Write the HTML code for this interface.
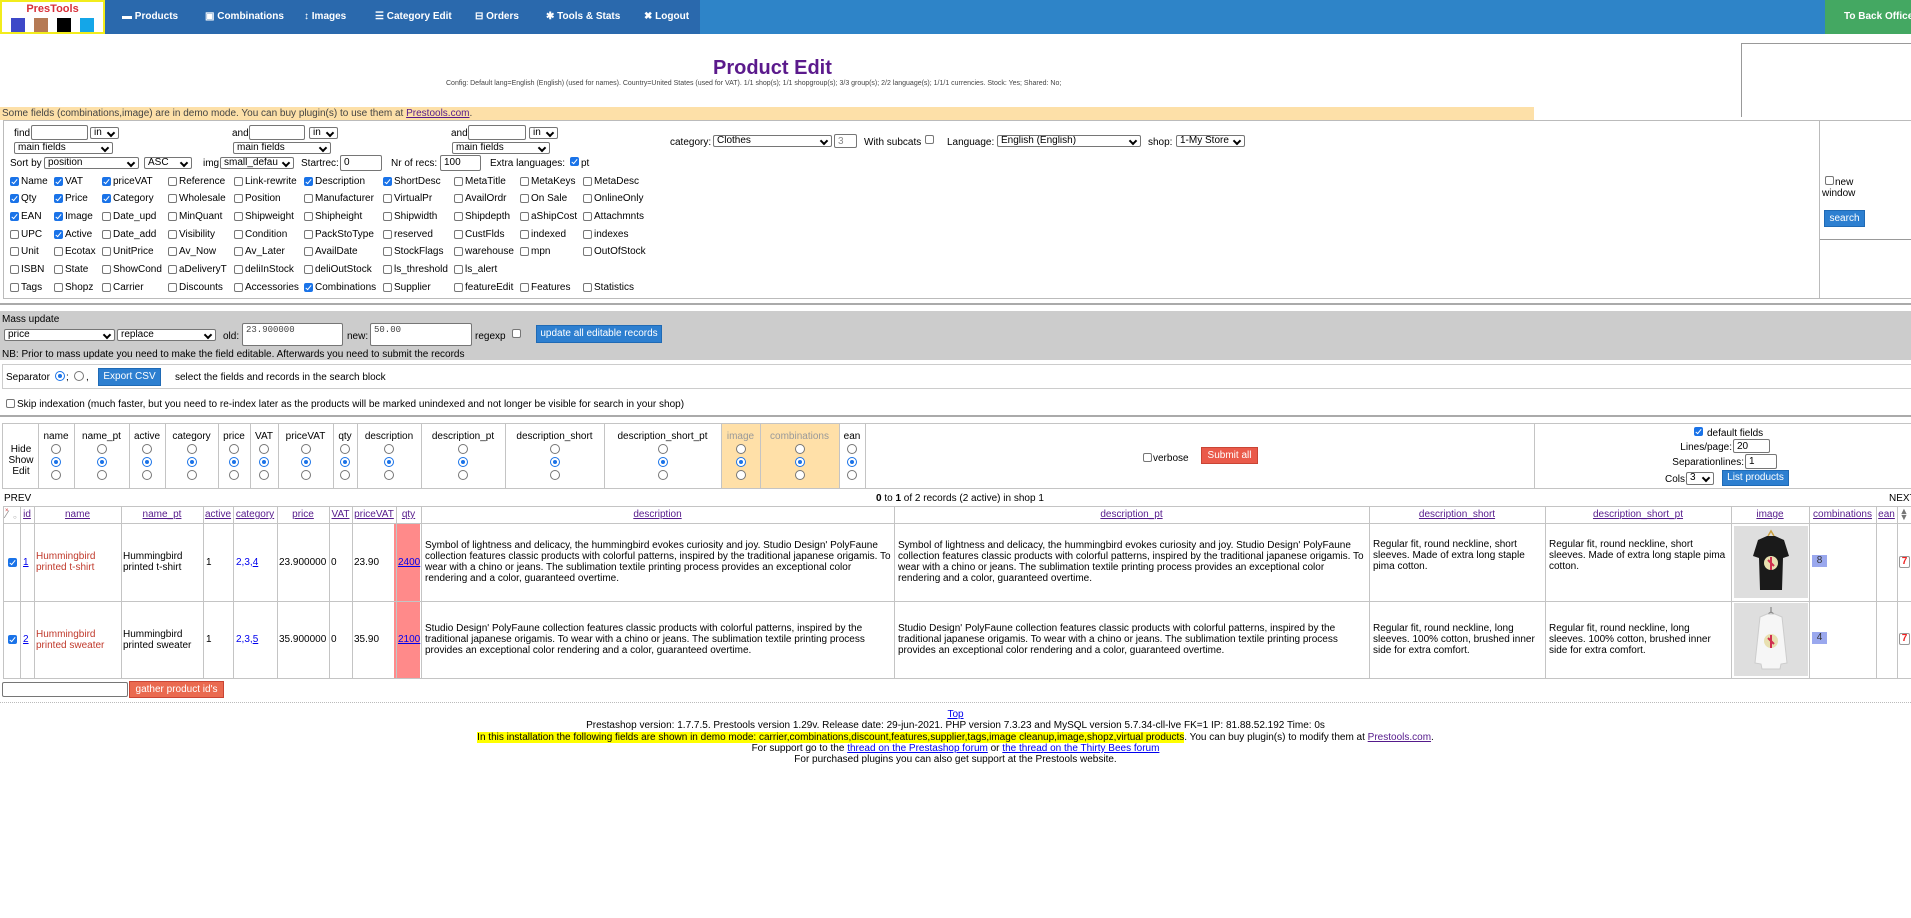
<!DOCTYPE html>
<html><head><meta charset="utf-8"><style>
*{box-sizing:border-box;margin:0;padding:0}
body{width:1911px;height:918px;position:relative;overflow:hidden;background:#fff;font-family:"Liberation Sans",Arial,sans-serif;font-size:10px;color:#000}
.a{position:absolute;white-space:nowrap}
.in{position:absolute;border:1px solid #767676;border-radius:2px;background:#fff;font-size:10px;padding:1px 3px;line-height:11px;overflow:hidden}
.sel{position:absolute;border:1px solid #767676;border-radius:2px;background:#fff;font-size:10px;padding:0 3px;line-height:10px;overflow:hidden;white-space:nowrap}
.sel:after{content:"";position:absolute;right:4px;top:2px;width:4px;height:4px;border-right:2px solid #000;border-bottom:2px solid #000;transform:rotate(45deg)}
.cb{position:absolute;width:9px;height:9px;border:1px solid #767676;border-radius:2px;background:#fff}
.cb.on{background:#1a73e8;border-color:#1a73e8}
.cb.on:after{content:"";position:absolute;left:2px;top:0px;width:2px;height:5px;border-right:1.5px solid #fff;border-bottom:1.5px solid #fff;transform:rotate(40deg)}
.rd{position:absolute;width:10px;height:10px;border:1px solid #767676;border-radius:50%;background:#fff}
.rd.on{border:1px solid #1a73e8}
.rd.on:after{content:"";position:absolute;left:2px;top:2px;width:4px;height:4px;border-radius:50%;background:#1a73e8}
.btn{position:absolute;background:#2d7fd0;color:#fff;border:1px solid #1f6ab5;text-align:center;white-space:nowrap}
.nav{position:absolute;top:11px;color:#fff;font-weight:bold;font-size:10px;white-space:nowrap}
.hd{position:absolute;top:507px;height:16px;line-height:16px;text-align:center;color:#551a8b;text-decoration:underline}
.tx{position:absolute;white-space:normal;line-height:11px}
a{color:#0000ee}
</style></head><body>

<div class="a" style="left:0;top:0;width:1911px;height:34px;background:#2e84c8"></div>
<div class="a" style="left:104px;top:0;width:596px;height:34px;background:#2a69ad"></div>
<div class="a" style="left:1825px;top:0;width:86px;height:34px;background:#44a862"></div>
<div class="a" style="left:0;top:0;width:105px;height:34px;background:#fff;border:2px solid #f2ec1c"></div>
<div class="a" style="left:0;top:3px;width:105px;text-align:center;color:#d8303a;font-weight:bold;font-size:11px">PresTools</div>
<div class="a" style="left:11px;top:18px;width:14px;height:14px;background:#3d48c8"></div>
<div class="a" style="left:34px;top:18px;width:14px;height:14px;background:#b57a55"></div>
<div class="a" style="left:57px;top:18px;width:14px;height:14px;background:#000"></div>
<div class="a" style="left:80px;top:18px;width:14px;height:14px;background:#14a6e8"></div>
<div class="nav" style="left:122px">▬ Products</div>
<div class="nav" style="left:205px">▣ Combinations</div>
<div class="nav" style="left:304px">↕ Images</div>
<div class="nav" style="left:375px">☰ Category Edit</div>
<div class="nav" style="left:475px">⊟ Orders</div>
<div class="nav" style="left:546px">✱ Tools &amp; Stats</div>
<div class="nav" style="left:644px">✖ Logout</div>
<div class="nav" style="left:1844px">To Back Office</div>

<div class="a" style="left:713px;top:57px;font-size:20px;font-weight:bold;color:#5b1a8c">Product Edit</div>
<div class="a" style="left:446px;top:80px;font-size:7px;color:#444">Config: Default lang=English (English) (used for names). Country=United States (used for VAT). 1/1 shop(s); 1/1 shopgroup(s); 3/3 group(s); 2/2 language(s); 1/1/1 currencies. Stock: Yes; Shared: No;</div>
<div class="a" style="left:1741px;top:43px;width:170px;height:74px;border-top:1px solid #999;border-left:1px solid #999"></div>
<div class="a" style="left:0;top:107px;width:1534px;height:13px;background:#fde0a8;color:#444;line-height:13px;padding-left:2px">Some fields (combinations,image) are in demo mode. You can buy plugin(s) to use them at <a href="#" style="color:#551a8b">Prestools.com</a>.</div>

<div class="a" style="left:3px;top:120px;width:1908px;height:179px;border:1px solid #bbb;border-right:none"></div>
<div class="a" style="left:1819px;top:121px;width:1px;height:177px;background:#bbb"></div>
<div class="a" style="left:1820px;top:239px;width:91px;height:1px;background:#999"></div>
<div class="a" style="left:0;top:303px;width:1911px;height:2px;background:#aaa"></div>

<div class="a" style="left:14px;top:128px">find</div><div class="in" style="left:31px;top:125px;width:57px;height:15px"></div><div class="sel" style="left:90px;top:127px;width:29px;height:12px">in</div>
<div class="sel" style="left:14px;top:142px;width:99px;height:12px">main fields</div>
<div class="a" style="left:232px;top:128px">and</div><div class="in" style="left:249px;top:125px;width:56px;height:15px"></div><div class="sel" style="left:309px;top:127px;width:29px;height:12px">in</div>
<div class="sel" style="left:233px;top:142px;width:98px;height:12px">main fields</div>
<div class="a" style="left:451px;top:128px">and</div><div class="in" style="left:468px;top:125px;width:58px;height:15px"></div><div class="sel" style="left:529px;top:127px;width:29px;height:12px">in</div>
<div class="sel" style="left:452px;top:142px;width:98px;height:12px">main fields</div>

<div class="a" style="left:670px;top:137px">category:</div><div class="sel" style="left:713px;top:135px;width:119px;height:12px">Clothes</div><div class="in" style="left:834px;top:134px;width:23px;height:14px;color:#888">3</div>
<div class="a" style="left:864px;top:137px">With subcats</div><div class="cb" style="left:925px;top:135px"></div>
<div class="a" style="left:947px;top:137px">Language:</div><div class="sel" style="left:997px;top:135px;width:144px;height:12px">English (English)</div>
<div class="a" style="left:1148px;top:137px">shop:</div><div class="sel" style="left:1176px;top:135px;width:69px;height:12px">1-My Store</div>

<div class="a" style="left:10px;top:158px">Sort by</div><div class="sel" style="left:44px;top:157px;width:95px;height:12px">position</div><div class="sel" style="left:144px;top:157px;width:48px;height:12px">ASC</div>
<div class="a" style="left:203px;top:158px">img</div><div class="sel" style="left:220px;top:157px;width:74px;height:12px">small_defau</div>
<div class="a" style="left:301px;top:158px">Startrec:</div><div class="in" style="left:340px;top:155px;width:42px;height:16px">0</div>
<div class="a" style="left:391px;top:158px">Nr of recs:</div><div class="in" style="left:440px;top:155px;width:41px;height:16px">100</div>
<div class="a" style="left:490px;top:158px">Extra languages:</div><div class="cb on" style="left:570px;top:157px"></div><div class="a" style="left:581px;top:158px">pt</div>

<div id="grid"></div>

<div class="cb" style="left:1825px;top:176px"></div><div class="a" style="left:1835px;top:177px">new</div><div class="a" style="left:1822px;top:188px">window</div>
<div class="btn" style="left:1824px;top:210px;width:41px;height:17px;line-height:15px">search</div>

<div class="a" style="left:0;top:311px;width:1911px;height:49px;background:#cccccc"></div>
<div class="a" style="left:2px;top:314px">Mass update</div>
<div class="sel" style="left:4px;top:329px;width:111px;height:12px">price</div>
<div class="sel" style="left:117px;top:329px;width:99px;height:12px">replace</div>
<div class="a" style="left:223px;top:331px">old:</div><div class="in" style="left:242px;top:323px;width:101px;height:23px;font-family:'Liberation Mono',monospace;font-size:9px;color:#444">23.900000</div>
<div class="a" style="left:347px;top:331px">new:</div><div class="in" style="left:370px;top:323px;width:102px;height:23px;font-family:'Liberation Mono',monospace;font-size:9px;color:#444">50.00</div>
<div class="a" style="left:475px;top:331px">regexp</div><div class="cb" style="left:512px;top:329px"></div>
<div class="btn" style="left:536px;top:325px;width:126px;height:18px;line-height:16px">update all editable records</div>
<div class="a" style="left:2px;top:349px">NB: Prior to mass update you need to make the field editable. Afterwards you need to submit the records</div>

<div class="a" style="left:2px;top:364px;width:1909px;height:25px;border:1px solid #ccc;border-right:none"></div>
<div class="a" style="left:6px;top:372px">Separator</div>
<div class="rd on" style="left:55px;top:371px"></div><div class="a" style="left:66px;top:372px">;</div>
<div class="rd" style="left:74px;top:371px"></div><div class="a" style="left:86px;top:372px">,</div>
<div class="btn" style="left:98px;top:368px;width:63px;height:18px;line-height:16px">Export CSV</div>
<div class="a" style="left:175px;top:372px">select the fields and records in the search block</div>

<div class="cb" style="left:6px;top:399px"></div>
<div class="a" style="left:17px;top:399px">Skip indexation (much faster, but you need to re-index later as the products will be marked unindexed and not longer be visible for search in your shop)</div>
<div class="a" style="left:0;top:415px;width:1911px;height:2px;background:#aaa"></div>

<div class="a" style="left:721px;top:424px;width:118px;height:64px;background:#ffe0a8"></div>
<div class="a" style="left:2px;top:423px;width:1909px;height:66px;border:1px solid #c4c4c4;border-right:none"></div>
<div class="a" style="left:4px;top:444px;width:34px;text-align:center;line-height:11px;font-size:10px">Hide<br>Show<br>Edit</div>
<div id="hsc"></div>
<div class="cb" style="left:1143px;top:453px"></div><div class="a" style="left:1153px;top:453px">verbose</div>
<div class="a" style="left:1201px;top:447px;width:57px;height:17px;background:#ea5a4a;border:1px solid #c94434;color:#fff;text-align:center;line-height:15px">Submit all</div>
<div class="cb on" style="left:1694px;top:427px"></div><div class="a" style="left:1707px;top:428px">default fields</div>
<div class="a" style="left:1680px;top:442px;width:52px;text-align:right">Lines/page:</div><div class="in" style="left:1733px;top:439px;width:37px;height:14px">20</div>
<div class="a" style="left:1660px;top:457px;width:84px;text-align:right">Separationlines:</div><div class="in" style="left:1745px;top:454px;width:32px;height:15px">1</div>
<div class="a" style="left:1665px;top:474px">Cols:</div><div class="sel" style="left:1686px;top:472px;width:28px;height:13px">3</div>
<div class="btn" style="left:1722px;top:470px;width:67px;height:16px;line-height:14px">List products</div>

<div class="a" style="left:4px;top:493px">PREV</div>
<div class="a" style="left:876px;top:493px"><b>0</b> to <b>1</b> of 2 records (2 active) in shop 1</div>
<div class="a" style="left:1889px;top:493px">NEXT</div>

<div class="a" style="left:394px;top:523px;width:26px;height:155px;background:#ff8a8a"></div>
<div class="a" style="left:3px;top:506px;width:1908px;height:173px;border-top:1px solid #c4c4c4;border-bottom:1px solid #c4c4c4"></div>
<div class="a" style="left:3px;top:523px;width:1908px;height:1px;background:#c4c4c4"></div>
<div class="a" style="left:3px;top:601px;width:1908px;height:1px;background:#c4c4c4"></div>
<div id="dcols"></div>
<div class="a" style="left:6px;top:509px;font-size:11px;color:#888">⁄</div><div class="a" style="left:5px;top:508px;font-size:6px;color:#c33">×</div><div class="a" style="left:13px;top:515px;font-size:6px;color:#888">○</div>
<div class="hd" style="left:20px;width:14px">id</div>
<div class="hd" style="left:34px;width:87px">name</div>
<div class="hd" style="left:121px;width:82px">name_pt</div>
<div class="hd" style="left:203px;width:30px">active</div>
<div class="hd" style="left:233px;width:44px">category</div>
<div class="hd" style="left:277px;width:52px">price</div>
<div class="hd" style="left:329px;width:23px">VAT</div>
<div class="hd" style="left:352px;width:44px">priceVAT</div>
<div class="hd" style="left:396px;width:25px">qty</div>
<div class="hd" style="left:421px;width:473px">description</div>
<div class="hd" style="left:894px;width:475px">description_pt</div>
<div class="hd" style="left:1369px;width:176px">description_short</div>
<div class="hd" style="left:1545px;width:186px">description_short_pt</div>
<div class="hd" style="left:1731px;width:78px">image</div>
<div class="hd" style="left:1809px;width:67px">combinations</div>
<div class="hd" style="left:1876px;width:21px">ean</div>
<div class="a" style="left:1899px;top:508px;width:10px;height:13px;color:#777;font-size:9px;line-height:6px;text-align:center">▲<br>▼</div>

<div class="cb on" style="left:8px;top:558px"></div>
<div class="a" style="left:23px;top:557px"><a href="#">1</a></div>
<div class="tx" style="left:36px;top:551px;width:84px;color:#c0392b">Hummingbird printed t-shirt</div>
<div class="tx" style="left:123px;top:551px;width:80px">Hummingbird printed t-shirt</div>
<div class="a" style="left:206px;top:557px">1</div>
<div class="a" style="left:236px;top:557px;color:#00e">2,3,<u>4</u></div>
<div class="a" style="left:279px;top:557px">23.900000</div>
<div class="a" style="left:331px;top:557px">0</div>
<div class="a" style="left:354px;top:557px">23.90</div>
<div class="a" style="left:398px;top:557px"><a href="#">2400</a></div>
<div class="tx" style="left:425px;top:540px;width:466px">Symbol of lightness and delicacy, the hummingbird evokes curiosity and joy. Studio Design' PolyFaune collection features classic products with colorful patterns, inspired by the traditional japanese origamis. To wear with a chino or jeans. The sublimation textile printing process provides an exceptional color rendering and a color, guaranteed overtime.</div>
<div class="tx" style="left:898px;top:540px;width:468px">Symbol of lightness and delicacy, the hummingbird evokes curiosity and joy. Studio Design' PolyFaune collection features classic products with colorful patterns, inspired by the traditional japanese origamis. To wear with a chino or jeans. The sublimation textile printing process provides an exceptional color rendering and a color, guaranteed overtime.</div>
<div class="tx" style="left:1373px;top:539px;width:168px">Regular fit, round neckline, short sleeves. Made of extra long staple pima cotton.</div>
<div class="tx" style="left:1549px;top:539px;width:180px">Regular fit, round neckline, short sleeves. Made of extra long staple pima cotton.</div>
<div class="a" style="left:1734px;top:526px;width:74px;height:72px;background:#dedede">
<svg width="74" height="72" viewBox="0 0 74 72"><path d="M34 10 L37 5 L40 10" stroke="#c9a040" fill="none" stroke-width="1.5"/><path d="M24 14 L33 10 L41 10 L50 14 L55 30 L49 32 L48 64 L26 64 L25 32 L19 30 Z" fill="#1a1a1a"/><circle cx="37" cy="37" r="7" fill="#e8e0b0"/><path d="M34 34 L40 40 M37 31 L37 44" stroke="#d03050" stroke-width="2"/></svg></div>
<div class="a" style="left:1812px;top:555px;width:15px;height:12px;background:#9aa8ee;color:#333;text-align:center;line-height:12px">8</div>
<div class="a" style="left:1899px;top:556px;width:11px;height:12px;border:1px solid #999;border-radius:2px;background:#fff;color:#e22;font-weight:bold;font-size:10px;line-height:10px;text-align:center">7</div>

<div class="cb on" style="left:8px;top:635px"></div>
<div class="a" style="left:23px;top:634px"><a href="#">2</a></div>
<div class="tx" style="left:36px;top:629px;width:84px;color:#c0392b">Hummingbird printed sweater</div>
<div class="tx" style="left:123px;top:629px;width:80px">Hummingbird printed sweater</div>
<div class="a" style="left:206px;top:634px">1</div>
<div class="a" style="left:236px;top:634px;color:#00e">2,3,<u>5</u></div>
<div class="a" style="left:279px;top:634px">35.900000</div>
<div class="a" style="left:331px;top:634px">0</div>
<div class="a" style="left:354px;top:634px">35.90</div>
<div class="a" style="left:398px;top:634px"><a href="#">2100</a></div>
<div class="tx" style="left:425px;top:623px;width:466px">Studio Design' PolyFaune collection features classic products with colorful patterns, inspired by the traditional japanese origamis. To wear with a chino or jeans. The sublimation textile printing process provides an exceptional color rendering and a color, guaranteed overtime.</div>
<div class="tx" style="left:898px;top:623px;width:466px">Studio Design' PolyFaune collection features classic products with colorful patterns, inspired by the traditional japanese origamis. To wear with a chino or jeans. The sublimation textile printing process provides an exceptional color rendering and a color, guaranteed overtime.</div>
<div class="tx" style="left:1373px;top:623px;width:172px">Regular fit, round neckline, long sleeves. 100% cotton, brushed inner side for extra comfort.</div>
<div class="tx" style="left:1549px;top:623px;width:170px">Regular fit, round neckline, long sleeves. 100% cotton, brushed inner side for extra comfort.</div>
<div class="a" style="left:1734px;top:603px;width:74px;height:73px;background:#dedede">
<svg width="74" height="73" viewBox="0 0 74 73"><path d="M37 4 L37 9 M31 13 L37 9 L43 13" stroke="#888" fill="none" stroke-width="1.2"/><path d="M26 14 L33 11 L41 11 L48 14 L53 60 L47 61 L46 66 L28 66 L27 61 L21 60 Z" fill="#f6f6f6" stroke="#ccc"/><circle cx="37" cy="38" r="7" fill="#e8e0b0"/><path d="M34 35 L40 41 M37 32 L37 45" stroke="#d03050" stroke-width="2"/></svg></div>
<div class="a" style="left:1812px;top:632px;width:15px;height:12px;background:#9aa8ee;color:#333;text-align:center;line-height:12px">4</div>
<div class="a" style="left:1899px;top:633px;width:11px;height:12px;border:1px solid #999;border-radius:2px;background:#fff;color:#e22;font-weight:bold;font-size:10px;line-height:10px;text-align:center">7</div>

<div class="in" style="left:2px;top:682px;width:126px;height:15px"></div>
<div class="a" style="left:129px;top:681px;width:95px;height:17px;background:#ea6a50;border:1px solid #c94434;color:#fff;text-align:center;line-height:15px">gather product id's</div>

<div class="a" style="left:0;top:702px;width:1911px;border-top:1px dotted #bbb"></div>
<div class="a" style="left:0;top:709px;width:1911px;text-align:center;line-height:11.3px;white-space:normal">
<a href="#">Top</a><br>
Prestashop version: 1.7.7.5. Prestools version 1.29v. Release date: 29-jun-2021. PHP version 7.3.23 and MySQL version 5.7.34-cll-lve FK=1 IP: 81.88.52.192 Time: 0s<br>
<span style="background:#ffff00">In this installation the following fields are shown in demo mode: carrier,combinations,discount,features,supplier,tags,image cleanup,image,shopz,virtual products</span>. You can buy plugin(s) to modify them at <a href="#" style="color:#551a8b">Prestools.com</a>.<br>
For support go to the <a href="#">thread on the Prestashop forum</a> or <a href="#">the thread on the Thirty Bees forum</a><br>
For purchased plugins you can also get support at the Prestools website.
</div>

<script>
var X=[10,54,102,168,234,304,383,454,520,583],Y=[182,199,217,235,252,270,288];
var R=[["Name*","VAT*","priceVAT*","Reference","Link-rewrite","Description*","ShortDesc*","MetaTitle","MetaKeys","MetaDesc"],
["Qty*","Price*","Category*","Wholesale","Position","Manufacturer","VirtualPr","AvailOrdr","On Sale","OnlineOnly"],
["EAN*","Image*","Date_upd","MinQuant","Shipweight","Shipheight","Shipwidth","Shipdepth","aShipCost","Attachmnts"],
["UPC","Active*","Date_add","Visibility","Condition","PackStoType","reserved","CustFlds","indexed","indexes"],
["Unit","Ecotax","UnitPrice","Av_Now","Av_Later","AvailDate","StockFlags","warehouse","mpn","OutOfStock"],
["ISBN","State","ShowCond","aDeliveryT","deliInStock","deliOutStock","ls_threshold","ls_alert"],
["Tags","Shopz","Carrier","Discounts","Accessories","Combinations*","Supplier","featureEdit","Features","Statistics"]];
var h="";R.forEach(function(r,i){r.forEach(function(t,j){var on=t.slice(-1)=="*";if(on)t=t.slice(0,-1);
h+='<div class="cb'+(on?' on':'')+'" style="left:'+X[j]+'px;top:'+(Y[i]-5)+'px"></div><div class="a" style="left:'+(X[j]+11)+'px;top:'+(Y[i]-6)+'px">'+t+'</div>';});});
document.getElementById("grid").outerHTML=h;
var B=[38,74,129,165,218,250,278,333,357,421,505,604,721,760,839,865],N=["name","name_pt","active","category","price","VAT","priceVAT","qty","description","description_pt","description_short","description_short_pt","image","combinations","ean"];
h="";B.forEach(function(b){h+='<div class="a" style="left:'+b+'px;top:424px;width:1px;height:64px;background:#c4c4c4"></div>';});
h+='<div class="a" style="left:1534px;top:424px;width:1px;height:64px;background:#c4c4c4"></div>';
for(var i=0;i<15;i++){var l=B[i],w=B[i+1]-B[i],c=l+w/2,col=(i==12||i==13)?'#999':'#000';
h+='<div class="a" style="left:'+l+'px;top:431px;width:'+w+'px;text-align:center;color:'+col+'">'+N[i]+'</div>';
h+='<div class="rd" style="left:'+(c-5)+'px;top:444px"></div><div class="rd on" style="left:'+(c-5)+'px;top:457px"></div><div class="rd" style="left:'+(c-5)+'px;top:470px"></div>';}
document.getElementById("hsc").outerHTML=h;
var D=[20,34,121,203,233,277,329,352,396,421,894,1369,1545,1731,1809,1876,1897];h="";
D.forEach(function(d){h+='<div class="a" style="left:'+d+'px;top:507px;width:1px;height:171px;background:#c4c4c4"></div>';});
h+='<div class="a" style="left:3px;top:507px;width:1px;height:171px;background:#c4c4c4"></div>';
document.getElementById("dcols").outerHTML=h;
</script>
</body></html>
